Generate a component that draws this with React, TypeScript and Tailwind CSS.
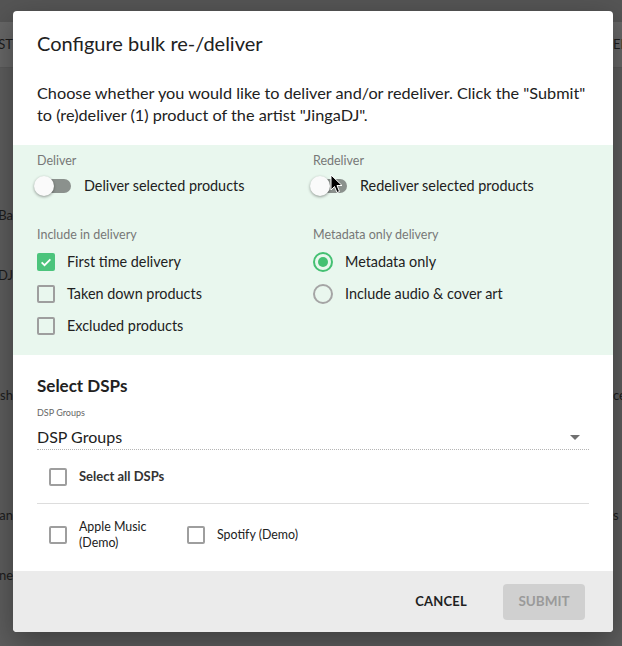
import React from "react";

const font = { fontFamily: "Lato, 'Noto Sans', sans-serif" };

function Switch() {
  return (
    <div className="relative w-[40px] h-[20px] shrink-0">
      <div className="absolute left-[3px] top-[3px] w-[34px] h-[14px] rounded-full bg-[#8b918d]" />
      <div className="absolute left-0 top-0 w-[20px] h-[20px] rounded-full bg-[#fafafa] shadow-[0_1px_3px_rgba(0,0,0,0.4)]" />
    </div>
  );
}

function Check({ checked }: { checked?: boolean }) {
  if (checked)
    return (
      <div className="w-[18px] h-[18px] rounded-[2px] bg-[#4cc47c] flex items-center justify-center shrink-0">
        <svg width="14" height="14" viewBox="0 0 24 24">
          <path d="M4.5 12.5l5 5 10-10" fill="none" stroke="white" strokeWidth="3" />
        </svg>
      </div>
    );
  return <div className="w-[18px] h-[18px] rounded-[2px] border-2 border-[#9e9e9e] shrink-0" />;
}

function Radio({ checked }: { checked?: boolean }) {
  return (
    <div
      className={
        "w-[20px] h-[20px] rounded-full border-2 flex items-center justify-center shrink-0 " +
        (checked ? "border-[#44c072]" : "border-[#a5a5a5]")
      }
    >
      {checked && <div className="w-[10px] h-[10px] rounded-full bg-[#44c072]" />}
    </div>
  );
}

const bgRows: [string, string][] = [
  ["Ba", ""],
  ["DJ", ""],
  ["", ""],
  ["sh", "ce"],
  ["", ""],
  ["an", "s"],
  ["ne", ""],
];

export default function App() {
  return (
    <div className="relative w-[622px] h-[646px] overflow-hidden bg-[#5d5d5d]" style={font}>
      {/* background page */}
      <div className="flex flex-col">
        <div className="h-[22px] bg-[#555555]" />
        <div className="h-[46px] bg-[#676767] flex items-center justify-between text-[13px] text-[#1c1c1c] border-b border-[#595959]">
          <span className="w-[13px] overflow-hidden whitespace-nowrap flex justify-end">ST</span>
          <span className="w-[9px] overflow-hidden whitespace-nowrap">EF</span>
        </div>
        <div className="h-[118px]" />
        {bgRows.map(([l, r], i) => (
          <div key={i} className="h-[60px] flex items-center justify-between text-[13px] text-[#1c1c1c]">
            <span className="w-[13px] overflow-hidden whitespace-nowrap flex justify-end">{l}</span>
            <span className="w-[9px] overflow-hidden whitespace-nowrap">{r}</span>
          </div>
        ))}
      </div>

      {/* modal */}
      <div className="absolute left-[13px] top-[11px] w-[600px] h-[621px] bg-white rounded-[4px] shadow-[0_10px_30px_rgba(0,0,0,0.35)] flex flex-col overflow-hidden text-[#212121]">
        <div className="pt-4 px-6 text-[20px] leading-8">Configure bulk re-/deliver</div>
        <div className="pt-[23px] px-6 text-[16.25px] leading-[22px]">
          Choose whether you would like to deliver and/or redeliver. Click the "Submit" to (re)deliver (1) product of
          the artist "JingaDJ".
        </div>

        <div className="mt-[19px] bg-[#e9f7ee] px-6 pt-[8px] pb-[13px] grid grid-cols-2">
          <div className="flex flex-col">
            <div className="text-[12.5px] leading-4 text-[#777777]">Deliver</div>
            <div className="h-[34px] flex items-center -ml-[3px]">
              <Switch />
              <span className="ml-[10px] text-[14.4px]">Deliver selected products</span>
            </div>
            <div className="mt-6 text-[12.5px] leading-4 text-[#777777]">Include in delivery</div>
            <div className="mt-[3px] flex flex-col">
              {[
                ["First time delivery", true],
                ["Taken down products", false],
                ["Excluded products", false],
              ].map(([t, c]) => (
                <div key={t as string} className="h-[32px] flex items-center">
                  <Check checked={c as boolean} />
                  <span className="ml-3 text-[14.4px]">{t as string}</span>
                </div>
              ))}
            </div>
          </div>
          <div className="flex flex-col">
            <div className="text-[12.5px] leading-4 text-[#777777]">Redeliver</div>
            <div className="h-[34px] flex items-center -ml-[3px] relative">
              <Switch />
              <span className="ml-[10px] text-[14.4px]">Redeliver selected products</span>
              <svg className="absolute left-[20px] top-[5px]" width="13" height="20" viewBox="0 0 13 20">
                <path d="M1 1 L1 16 L4.5 12.5 L7 18.5 L9.5 17.5 L7 11.5 L12 11.5 Z" fill="black" stroke="white" strokeWidth="1" />
              </svg>
            </div>
            <div className="mt-6 text-[12.5px] leading-4 text-[#777777]">Metadata only delivery</div>
            <div className="mt-[3px] flex flex-col">
              <div className="h-[32px] flex items-center">
                <Radio checked />
                <span className="ml-3 text-[14.4px]">Metadata only</span>
              </div>
              <div className="h-[32px] flex items-center">
                <Radio />
                <span className="ml-3 text-[14.4px]">Include audio &amp; cover art</span>
              </div>
            </div>
          </div>
        </div>

        <div className="px-6 flex flex-col">
          <div className="mt-[19px] text-[17px] leading-6 font-bold">Select DSPs</div>
          <div className="mt-[9px] text-[9px] leading-3 text-[#666666]">DSP Groups</div>
          <div className="mt-[6px] h-[25px] flex items-center justify-between border-b border-dotted border-[#b5b5b5]">
            <span className="text-[16px]">DSP Groups</span>
            <svg width="24" height="24" viewBox="0 0 24 24" className="mr-[2px]">
              <path d="M7 10l5 5 5-5z" fill="#707070" />
            </svg>
          </div>
          <div className="h-[54px] flex items-center pl-3 border-b border-[#dddddd]">
            <Check />
            <span className="ml-3 text-[13px] font-bold text-[#333333]">Select all DSPs</span>
          </div>
          <div className="h-[58px] pt-[3px] pl-3 flex items-center">
            <div className="w-[138px] flex items-center">
              <Check />
              <span className="ml-3 w-[88px] text-[12.4px] leading-4">Apple Music (Demo)</span>
            </div>
            <div className="w-[138px] flex items-center">
              <Check />
              <span className="ml-3 w-[90px] text-[12.4px] leading-4">Spotify (Demo)</span>
            </div>
          </div>
        </div>

        <div className="mt-auto h-[61px] bg-[#ebebeb] flex items-center justify-end pr-[28px] gap-5">
          <button className="px-4 h-[36px] text-[13px] font-bold text-[#1f1f1f] tracking-[0.2px]">CANCEL</button>
          <button className="w-[82px] h-[36px] rounded-[4px] bg-[#d0d0d0] text-[13.5px] font-bold text-[#9a9a9a]">
            SUBMIT
          </button>
        </div>
      </div>
    </div>
  );
}
